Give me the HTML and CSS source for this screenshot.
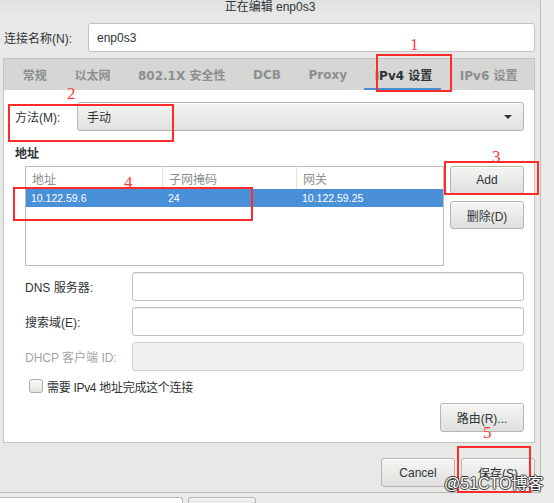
FILE: index.html
```html
<!DOCTYPE html>
<html lang="zh-CN">
<head>
<meta charset="utf-8">
<title>正在编辑 enp0s3</title>
<link rel="stylesheet" href="styles.css">
</head>
<body>
<div class="screen">
  <div class="dialog">
    <div class="titlebar">正在编辑 enp0s3</div>
    <div class="content">
      <div class="name-row">
        <span class="name-label">连接名称(N):</span>
        <div class="entry">enp0s3</div>
      </div>
      <div class="notebook">
        <div class="tabs">
          <span class="tab">常规</span>
          <span class="tab">以太网</span>
          <span class="tab">802.1X 安全性</span>
          <span class="tab">DCB</span>
          <span class="tab">Proxy</span>
          <span class="tab active">IPv4 设置</span>
          <span class="tab">IPv6 设置</span>
        </div>
        <div class="page">
          <div class="method-row">
            <span class="method-label">方法(M):</span>
            <div class="combo">
              <span>手动</span>
              <svg class="combo-arrow" width="8" height="4" viewBox="0 0 8 4"><path d="M0 0H8L4 4Z" fill="#2e3436"/></svg>
            </div>
          </div>
          <div class="section-title">地址</div>
          <div class="addr-block">
            <div class="addr-table">
              <div class="thead">
                <span class="th">地址</span>
                <span class="th">子网掩码</span>
                <span class="th">网关</span>
              </div>
              <div class="tr selected">
                <span class="td">10.122.59.6</span>
                <span class="td">24</span>
                <span class="td">10.122.59.25</span>
              </div>
            </div>
            <div class="addr-buttons">
              <div class="btn btn-add">Add</div>
              <div class="btn btn-del">删除(D)</div>
            </div>
          </div>
          <div class="form-grid">
            <span class="form-label">DNS 服务器:</span>
            <div class="input"></div>
            <span class="form-label">搜索域(E):</span>
            <div class="input"></div>
            <span class="form-label disabled">DHCP 客户端 ID:</span>
            <div class="input input-disabled"></div>
          </div>
          <div class="check-row">
            <span class="checkbox"></span>
            <span class="check-text">需要 IPv4 地址完成这个连接</span>
          </div>
          <div class="route-row">
            <div class="btn btn-route">路由(R)...</div>
          </div>
        </div>
      </div>
      <div class="actions">
        <div class="btn btn-action">Cancel</div>
        <div class="btn btn-action">保存(S)</div>
      </div>
    </div>
  </div>
  <div class="underbar">
    <div class="under-field"></div>
    <div class="under-btn"></div>
  </div>

  <div class="mark box1"></div>
  <div class="num n1">1</div>
  <div class="mark box2"></div>
  <div class="num n2">2</div>
  <div class="mark box3"></div>
  <div class="num n3">3</div>
  <div class="mark box4"></div>
  <div class="num n4">4</div>
  <div class="mark box5"></div>
  <div class="num n5">5</div>
  <div class="watermark">@51CTO博客</div>
</div>
</body>
</html>
```

FILE: styles.css
```css
* { box-sizing: border-box; }

html, body {
  margin: 0;
  padding: 0;
}

body {
  font-family: "Liberation Sans", "Noto Sans CJK SC", sans-serif;
  font-size: 12px;
  color: #2e3436;
  background: #ebebea;
}

.screen {
  position: relative;
  width: 554px;
  height: 503px;
  overflow: hidden;
  background: #ebebea;
}

.dialog {
  width: 541px;
  height: 493px;
  background: #e8e8e7;
  border-right: 1px solid #bcbcb9;
  border-bottom: 1px solid #b9b9b6;
  display: flex;
  flex-direction: column;
}

.titlebar {
  height: 16px;
  line-height: 14px;
  text-align: center;
  background: linear-gradient(#e0e0df, #e8e8e7);
}

.content {
  padding: 0 5px 0 3px;
  display: flex;
  flex-direction: column;
}

.name-row {
  margin-top: 7px;
  height: 29px;
  display: flex;
  align-items: center;
}

.name-label {
  width: 85px;
  padding-left: 1px;
}

.entry {
  flex: 1;
  height: 29px;
  background: #fff;
  border: 1px solid #c3c3c0;
  border-radius: 3px;
  padding-left: 8px;
  display: flex;
  align-items: center;
}

.notebook {
  margin-top: 6px;
  border: 1px solid #c3c3c0;
  background: #fff;
}

.tabs {
  height: 31px;
  background: #d6d6d5;
  display: flex;
  padding-left: 5px;
  font-family: "DejaVu Sans", "Noto Sans CJK SC", sans-serif;
  font-weight: bold;
  font-size: 12px;
  color: #8c8f90;
}

.tab {
  position: relative;
  padding: 0 13.8px;
  display: flex;
  align-items: center;
}

.tab.active {
  color: #2e3436;
}

.tab.active::after {
  content: "";
  position: absolute;
  left: 3px;
  right: 5px;
  bottom: 0;
  height: 2px;
  background: #4a90d9;
}

.page {
  height: 352px;
  padding: 0 10px 0 11px;
  display: flex;
  flex-direction: column;
}

.method-row {
  margin-top: 12px;
  height: 29px;
  display: flex;
  align-items: center;
}

.method-label {
  width: 62px;
}

.combo {
  flex: 1;
  height: 29px;
  border: 1px solid #b4b4b1;
  border-radius: 3px;
  background: linear-gradient(#f4f4f3, #e1e1df);
  box-shadow: inset 0 1px #fff;
  display: flex;
  align-items: center;
  justify-content: space-between;
  padding: 0 11px 0 9px;
}

.combo-arrow {
  display: block;
}

.section-title {
  margin-top: 15px;
  line-height: 16px;
  font-weight: bold;
}

.addr-block {
  margin-top: 4px;
  margin-left: 10px;
  display: flex;
  gap: 6px;
}

.addr-table {
  width: 419px;
  height: 100px;
  border: 1px solid #bdbdba;
  background: #fff;
}

.thead, .tr {
  display: grid;
  grid-template-columns: 137px 134px 1fr;
}

.thead {
  height: 22px;
  color: #8c8f90;
}

.th {
  display: flex;
  align-items: center;
  padding-left: 6px;
  border-right: 1px solid #e2e2e0;
}

.th:last-child {
  border-right: none;
}

.tr {
  height: 18px;
  font-size: 10.5px;
}

.tr.selected {
  background: #4a90d9;
  color: #fff;
}

.td {
  display: flex;
  align-items: center;
  padding-left: 5px;
}

.addr-buttons {
  flex: 1;
  display: flex;
  flex-direction: column;
  gap: 7px;
}

.btn {
  height: 28px;
  border: 1px solid #b4b4b1;
  border-radius: 3px;
  background: linear-gradient(#f5f5f4, #dfdfdd);
  box-shadow: inset 0 1px #fff;
  display: flex;
  align-items: center;
  justify-content: center;
  color: #2e3436;
}

.form-grid {
  margin-top: 6px;
  margin-left: 10px;
  display: grid;
  grid-template-columns: 107px 1fr;
  grid-auto-rows: 29px;
  row-gap: 6px;
  align-items: center;
}

.form-label.disabled {
  color: #a2a4a4;
}

.input {
  height: 29px;
  background: #fff;
  border: 1px solid #c0c0bd;
  border-radius: 3px;
  box-shadow: inset 0 1px #ececeb;
}

.input-disabled {
  background: #f0f0ef;
  border-color: #cfcfcc;
  box-shadow: none;
}

.check-row {
  margin-top: 8px;
  margin-left: 14px;
  display: flex;
  align-items: center;
  gap: 4px;
  height: 14px;
}

.check-text {
  letter-spacing: -0.3px;
}

.checkbox {
  width: 14px;
  height: 14px;
  border: 1px solid #a9a9a6;
  border-radius: 3px;
  background: linear-gradient(#fbfbfa, #e3e3e1);
}

.route-row {
  margin-top: 10px;
  display: flex;
  justify-content: flex-end;
}

.btn-route {
  width: 84px;
  height: 29px;
}

.actions {
  margin-top: 15px;
  display: flex;
  justify-content: flex-end;
  gap: 6px;
}

.btn-action {
  width: 74px;
  height: 29px;
}

.underbar {
  height: 10px;
  display: flex;
  padding-top: 4px;
  gap: 5px;
}

.under-field {
  width: 183px;
  background: #fff;
  border: 1px solid #b7b7b4;
  border-bottom: none;
  border-left: none;
  border-radius: 0 3px 0 0;
}

.under-btn {
  width: 68px;
  background: linear-gradient(#f3f3f2, #e6e6e4);
  border: 1px solid #b7b7b4;
  border-bottom: none;
  border-radius: 3px 3px 0 0;
}

/* annotations */
.mark {
  position: absolute;
  border: 2px solid #ff2b2b;
}

.box1 { left: 376px; top: 54px; width: 76px; height: 38px; }
.box2 { left: 8px; top: 104px; width: 166px; height: 38px; }
.box3 { left: 444px; top: 161px; width: 95px; height: 34px; }
.box4 { left: 13px; top: 187px; width: 240px; height: 34px; }
.box5 { left: 457px; top: 446px; width: 74px; height: 47px; }

.num {
  position: absolute;
  font-family: "Liberation Serif", serif;
  font-size: 17px;
  line-height: 17px;
  color: #ff3b3b;
}

.n1 { left: 410px; top: 36px; }
.n2 { left: 67px; top: 85px; }
.n3 { left: 492px; top: 148px; }
.n4 { left: 124px; top: 174px; }
.n5 { left: 483px; top: 424px; }

.watermark {
  position: absolute;
  left: 444px;
  top: 475px;
  font-family: "Liberation Sans", "Noto Sans CJK SC", sans-serif;
  font-size: 16px;
  line-height: 18px;
  color: #ffffff;
  text-shadow: 1px 0 #3a3a3a, -1px 0 #3a3a3a, 0 1px #3a3a3a, 0 -1px #3a3a3a;
}
```
